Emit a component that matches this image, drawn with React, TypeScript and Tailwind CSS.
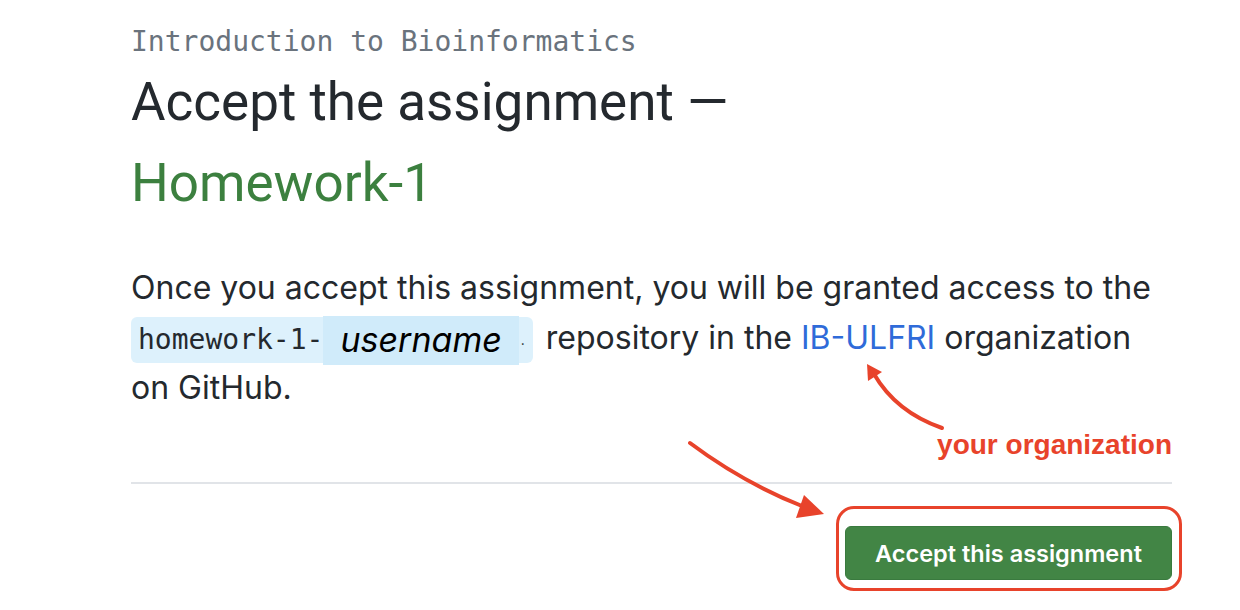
const sans = "font-['Inter','Liberation_Sans',sans-serif]";
const mono = "font-['DejaVu_Sans_Mono','Liberation_Mono',monospace]";

function Arrows() {
  return (
    <svg
      className="pointer-events-none absolute left-0 top-0"
      width="1240"
      height="610"
      viewBox="0 0 1240 610"
      aria-hidden="true"
    >
      <g stroke="#e8432b" strokeWidth="4" fill="none" strokeLinecap="round">
        <path d="M690 443 Q 742 482 802 506" />
        <path d="M942 428 Q 896 412 874 374" />
      </g>
      <g fill="#e8432b">
        <polygon points="804,495 796,518 824,514" />
        <polygon points="867,364 868,381 882,372" />
      </g>
    </svg>
  );
}

export default function App() {
  return (
    <div className={`relative h-[610px] w-[1240px] overflow-hidden bg-white ${sans}`}>
      <div className="w-[1172px] pl-[131px] pt-[24px]">
        <p className={`${mono} text-[28px] leading-[36px] text-[#6a737d]`}>
          Introduction to Bioinformatics
        </p>
        <h1 className="mt-[2px] font-['Roboto','Inter',sans-serif] text-[53px] font-normal leading-[81px] text-[#24292e]">
          Accept the assignment —
          <br />
          <span className="text-[#3c803f]">Homework-1</span>
        </h1>
        <p className="mt-[39px] w-[1030px] text-[32px] leading-[50px] text-[#24292e]">
          Once you accept this assignment, you will be granted access to the{" "}
          <span className="mr-[4px] inline-flex h-[46px] items-center rounded-md bg-[#ddf1fc] pl-[7px] pr-[8px] align-middle">
            <span className={`${mono} text-[28px] text-[#24292e]`}>homework-1-</span>
            <span className="flex h-[49px] items-center bg-[#d0ebfa] px-[17px] text-[34px] italic text-black">
              username
            </span>
            <span className="ml-[2px] text-[14px]">.</span>
          </span>{" "}
          repository in the <span className="text-[#2f6bd9]">IB-ULFRI</span> organization on GitHub.
        </p>
        <div className="mt-[12px] flex justify-end">
          <span className="font-['Liberation_Sans',sans-serif] text-[28px] font-bold leading-[40px] text-[#e8432b]">
            your organization
          </span>
        </div>
        <div className="mt-[17px] h-[2px] w-full bg-[#e1e4e8]" />
        <div className="mt-[22px] flex justify-end">
          <div className="-mr-[10px] rounded-[18px] border-[3px] border-[#e8432b] pb-[8px] pl-[6px] pr-[7px] pt-[17px]">
            <button
              type="button"
              className="h-[54px] w-[327px] rounded-md border border-[#3a7a3f] bg-[#428545] text-[23.5px] font-semibold text-white"
            >
              Accept this assignment
            </button>
          </div>
        </div>
      </div>
      <Arrows />
    </div>
  );
}
